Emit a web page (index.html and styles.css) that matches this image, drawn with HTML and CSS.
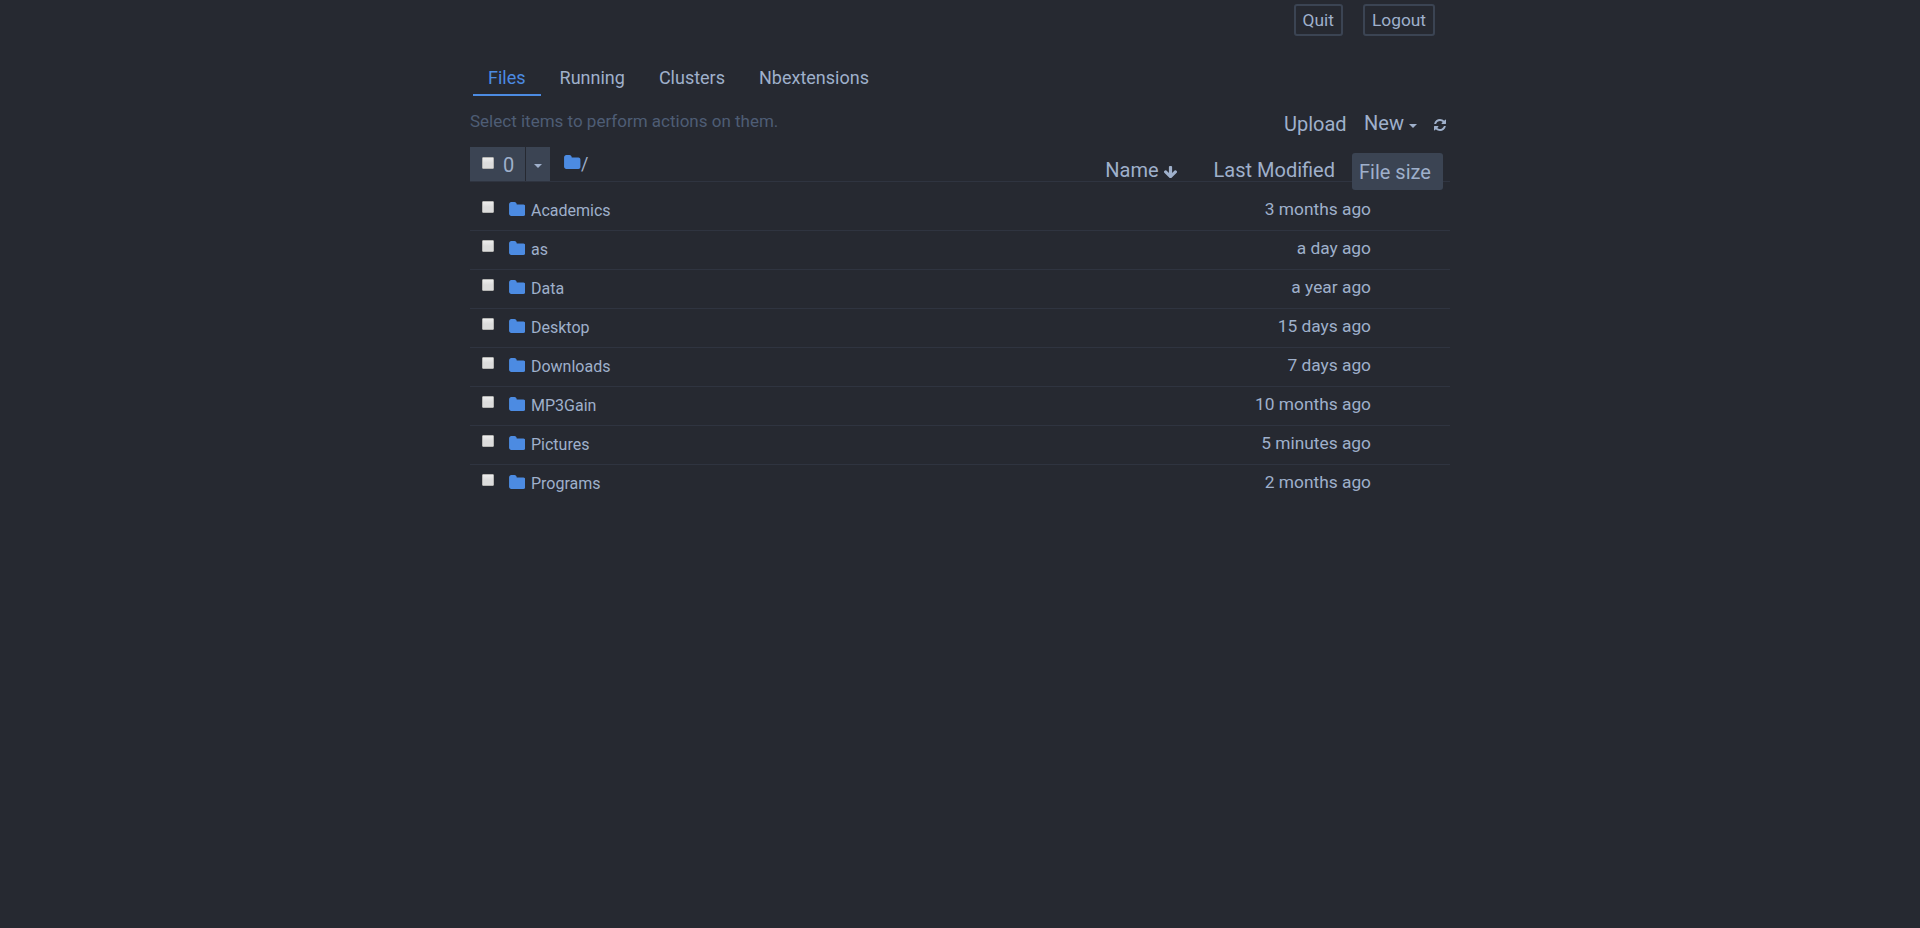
FILE: index.html
```html
<!DOCTYPE html>
<html lang="en">
<head>
<meta charset="utf-8">
<title>Home</title>
<link rel="stylesheet" href="styles.css">
</head>
<body>
<svg class="defs" width="0" height="0">
  <symbol id="folder" viewBox="0 0 1664 1408"><path d="M1664 480v704q0 92-66 158t-158 66H224q-92 0-158-66T0 1184V224q0-92 66-158T224 0h320q92 0 158 66t66 158v32h672q92 0 158 66t66 158z"/></symbol>
</svg>
<div class="container">
  <header class="header">
    <button class="btn">Quit</button>
    <button class="btn">Logout</button>
  </header>
  <nav class="tabs">
    <a class="tab active">Files</a>
    <a class="tab">Running</a>
    <a class="tab">Clusters</a>
    <a class="tab">Nbextensions</a>
  </nav>
  <div class="toolbar">
    <span class="hint">Select items to perform actions on them.</span>
    <div class="actions">
      <span class="upload">Upload</span>
      <span class="new">New <i class="caret"></i></span>
      <svg class="refresh" viewBox="0 0 1536 1536"><path d="M1511 928q0 5-1 7-64 268-268 434.500T764 1536q-146 0-282.500-55T238 1324l-129 129q-19 19-45 19t-45-19-19-45V960q0-26 19-45t45-19h448q26 0 45 19t19 45-19 45l-137 137q71 66 161 102t187 36q134 0 250-65t186-179q11-17 53-117 8-23 30-23h192q13 0 22.500 9.500t9.500 22.500zm25-800v448q0 26-19 45t-45 19h-448q-26 0-45-19t-19-45 19-45l138-138Q969 256 768 256q-134 0-250 65T332 500q-11 17-53 117-8 23-30 23H50q-13 0-22.500-9.500T18 608v-7q65-268 270-434.500T768 0q146 0 284 55.500T1297 212l130-129q19-19 45-19t45 19 19 45z"/></svg>
    </div>
  </div>
  <div class="list-header">
    <div class="select-all"><i class="check"></i><span>0</span></div>
    <div class="select-menu"><i class="caret"></i></div>
    <div class="crumbs"><svg class="folder"><use href="#folder"/></svg><span>/</span></div>
    <div class="sorts">
      <span class="sort">Name <svg class="arrow" viewBox="117 128 1558 1483"><path d="M1675 832q0 53-37 90l-651 652q-39 37-91 37-53 0-90-37L155 922q-38-36-38-90 0-53 38-91l74-75q39-37 91-37 53 0 90 37l294 294V256q0-52 38-90t90-38h128q52 0 90 38t38 90v704l294-294q37-37 90-37 52 0 91 37l75 75q37 39 37 91z"/></svg></span>
      <span class="sort modified">Last Modified</span>
      <span class="sort size">File size</span>
    </div>
  </div>
  <div class="rows">
    <div class="row"><i class="check"></i><svg class="folder"><use href="#folder"/></svg><span class="name">Academics</span><span class="date">3 months ago</span></div>
    <div class="row"><i class="check"></i><svg class="folder"><use href="#folder"/></svg><span class="name">as</span><span class="date">a day ago</span></div>
    <div class="row"><i class="check"></i><svg class="folder"><use href="#folder"/></svg><span class="name">Data</span><span class="date">a year ago</span></div>
    <div class="row"><i class="check"></i><svg class="folder"><use href="#folder"/></svg><span class="name">Desktop</span><span class="date">15 days ago</span></div>
    <div class="row"><i class="check"></i><svg class="folder"><use href="#folder"/></svg><span class="name">Downloads</span><span class="date">7 days ago</span></div>
    <div class="row"><i class="check"></i><svg class="folder"><use href="#folder"/></svg><span class="name">MP3Gain</span><span class="date">10 months ago</span></div>
    <div class="row"><i class="check"></i><svg class="folder"><use href="#folder"/></svg><span class="name">Pictures</span><span class="date">5 minutes ago</span></div>
    <div class="row"><i class="check"></i><svg class="folder"><use href="#folder"/></svg><span class="name">Programs</span><span class="date">2 months ago</span></div>
  </div>
</div>
</body>
</html>
```
FILE: styles.css
```css
* { box-sizing: border-box; }
body {
  margin: 0;
  background: #262931;
  color: #9fb0cb;
  font-family: Roboto, "Noto Sans", sans-serif;
  font-size: 17.33px;
}
.defs { display: block; }
svg { fill: currentColor; flex: none; }
.container { width: 980px; margin: 0 auto; }

.header {
  display: flex;
  justify-content: flex-end;
  gap: 20px;
  height: 60px;
  padding: 4px 15px 0 0;
}
.btn {
  height: 32px;
  padding: 0 7px;
  border: 2px solid #3b4453;
  border-radius: 3px;
  background: none;
  color: inherit;
  font: inherit;
  line-height: 26px;
}

.tabs { display: flex; gap: 4px; padding-left: 3px; height: 36px; font-size: 18px; }
.tab { padding: 0 15px; height: 36px; line-height: 36px; }
.tab.active { color: #4c8be2; border-bottom: 2px solid #4c8be2; }

.toolbar { display: flex; justify-content: space-between; height: 51px; }
.hint { color: #4e5d75; font-size: 17px; line-height: 24px; padding-top: 13px; }
.actions { display: flex; padding-right: 4px; font-size: 20px; line-height: 24px; }
.upload { padding-top: 16px; }
.new { padding-top: 15px; margin-left: 17.5px; display: flex; }
.caret {
  width: 0;
  height: 0;
  border: 4px solid transparent;
  border-top-color: currentColor;
  border-bottom: 0;
}
.new .caret { margin: 13px 0 0 5px; }
.refresh { width: 12px; height: 12px; margin: 23px 0 0 17px; }

.list-header { display: flex; height: 35px; border-bottom: 1px solid #2f3440; }
.check {
  flex: none;
  width: 12px;
  height: 12px;
  border: 1px solid #b5b5b3;
  border-radius: 1px;
  background: linear-gradient(#ededed, #dcdcdc 50%);
}
.select-all {
  display: flex;
  width: 55px;
  height: 34px;
  padding: 10px 0 0 12px;
  background: #3b4453;
  font-size: 20px;
}
.select-all span { margin-left: 9px; line-height: 24px; margin-top: -4px; }
.select-menu { width: 24px; height: 34px; margin-left: 1px; padding: 17px 0 0 8px; background: #3b4453; }
.select-menu .caret { display: block; }
.crumbs { display: flex; margin-left: 14.4px; padding-top: 8px; }
.crumbs span { font-size: 18px; line-height: 18px; }
.folder { width: 16.7px; height: 14px; fill: #4c8be2; }
.sorts { display: flex; margin-left: auto; padding-right: 7px; font-size: 20px; line-height: 24px; }
.sort { padding-top: 11px; }
.arrow { width: 13px; height: 12.4px; vertical-align: -1px; }
.modified { margin-left: 37px; }
.size {
  width: 91px;
  height: 37px;
  margin: 6px 0 0 17px;
  padding: 7px 0 0 7px;
  border-radius: 3px;
  background: #3b4453;
}

.rows { padding-top: 10px; }
.row {
  display: flex;
  align-items: flex-start;
  height: 39px;
  padding: 9px 79px 0 12px;
  border-bottom: 1px solid #2f3440;
}
.row:last-child { border-bottom: 0; }
.row .folder { margin: 1px 0 0 14.6px; }
.name { margin-left: 5.7px; margin-top: -1px; font-size: 16px; line-height: 22px; }
.date { margin: -3px 0 0 auto; line-height: 22px; }
```
